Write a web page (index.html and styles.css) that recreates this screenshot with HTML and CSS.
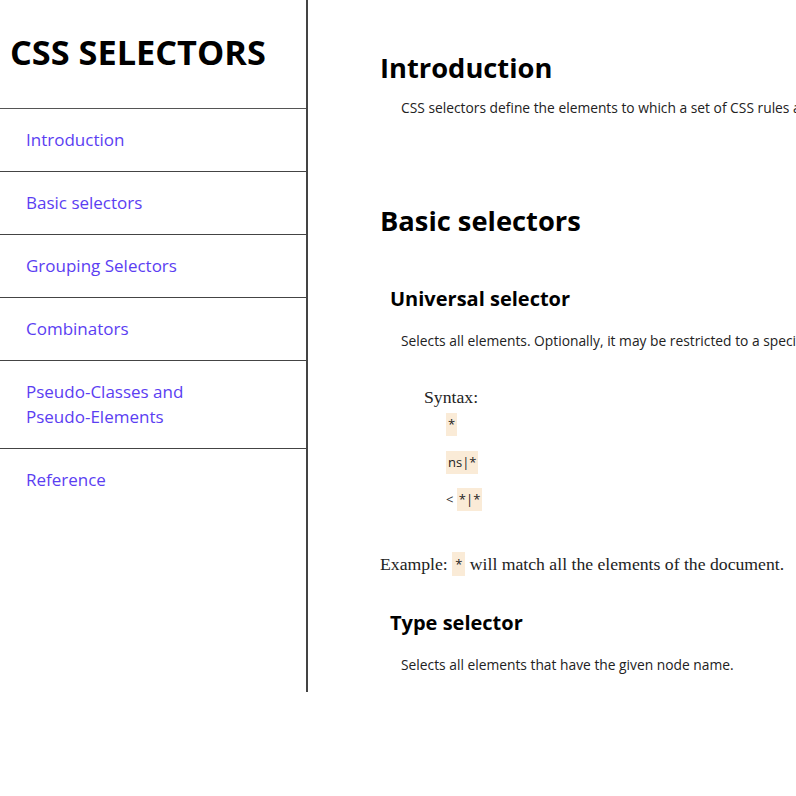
FILE: index.html
```html
<!DOCTYPE html>
<html lang="en">
<head>
<meta charset="utf-8">
<title>CSS Selectors</title>
<link rel="stylesheet" href="styles.css">
</head>
<body>
<div class="page">
  <nav id="navbar" class="navbar">
    <header class="nav-title">CSS SELECTORS</header>
    <ul class="nav-list">
      <li class="nav-item"><a class="nav-link" href="#Introduction">Introduction</a></li>
      <li class="nav-item"><a class="nav-link" href="#Basic_selectors">Basic selectors</a></li>
      <li class="nav-item"><a class="nav-link" href="#Grouping_Selectors">Grouping Selectors</a></li>
      <li class="nav-item"><a class="nav-link" href="#Combinators">Combinators</a></li>
      <li class="nav-item"><a class="nav-link" href="#Pseudo">Pseudo-Classes and Pseudo-Elements</a></li>
      <li class="nav-item"><a class="nav-link" href="#Reference">Reference</a></li>
    </ul>
  </nav>
  <main id="main-doc" class="main-doc">
    <section class="main-section" id="Introduction">
      <header class="section-title">Introduction</header>
      <p class="text intro-text">CSS selectors define the elements to which a set of CSS rules apply.</p>
    </section>
    <section class="main-section basic" id="Basic_selectors">
      <header class="section-title">Basic selectors</header>
      <article class="sub">
        <h3 class="sub-title first">Universal selector</h3>
        <p class="text">Selects all elements. Optionally, it may be restricted to a specific namespace or to all namespaces.</p>
        <div class="syntax">
          <div class="syntax-label">Syntax:</div>
          <ul class="syntax-list">
            <li class="syntax-item"><code class="code">*</code></li>
            <li class="syntax-item"><code class="code">ns|*</code></li>
            <li class="syntax-item"><span class="lt">&lt;</span> <code class="code">*|*</code></li>
          </ul>
        </div>
        <p class="example">Example: <code class="code">*</code> will match all the elements of the document.</p>
        <h3 class="sub-title">Type selector</h3>
        <p class="text">Selects all elements that have the given node name.</p>
      </article>
    </section>
  </main>
</div>
</body>
</html>
```
FILE: styles.css
```css
html, body {
  margin: 0;
  padding: 0;
  overflow: hidden;
  background: #fff;
}
.page {
  display: flex;
  align-items: flex-start;
  width: 1400px;
}
.navbar {
  flex: 0 0 306px;
  height: 692px;
  border-right: 2px solid #444;
  font-family: "Open Sans", sans-serif;
}
.nav-title {
  height: 109px;
  box-sizing: border-box;
  padding: 32px 0 0 10px;
  font-size: 34.3px;
  line-height: 40px;
  font-weight: 700;
  color: #000;
  border-bottom: 1px solid #555;
}
.nav-list {
  list-style: none;
  margin: 0;
  padding: 0;
}
.nav-item {
  padding: 18px 70px 19px 26px;
  border-bottom: 1px solid #444;
  font-size: 17px;
  line-height: 25px;
}
.nav-item:last-child {
  border-bottom: none;
}
.nav-link {
  color: #5b3ef2;
  text-decoration: none;
}
.main-doc {
  flex: 1;
  padding: 48px 0 0 72px;
  font-family: "Open Sans", sans-serif;
  white-space: nowrap;
}
.section-title {
  font-size: 27.3px;
  line-height: 40px;
  font-weight: 700;
  color: #000;
}
.text {
  margin: 8px 0 0 21px;
  font-size: 13.8px;
  line-height: 20px;
  color: #222;
}
.intro-text {
  margin-top: 10px;
}
.basic {
  margin-top: 83px;
}
.sub {
  padding-left: 10px;
}
.sub-title {
  margin: 33px 0 0 0;
  font-size: 20px;
  line-height: 28px;
  font-weight: 700;
  color: #000;
}
.sub-title.first {
  margin-top: 44px;
}
.sub .text {
  margin: 18px 0 0 11px;
}
.syntax {
  margin: 35px 0 0 34px;
  font-family: "Liberation Serif", serif;
  font-size: 17.7px;
  color: #222;
}
.syntax-label {
  line-height: 22px;
}
.syntax-list {
  list-style: none;
  margin: 5px 0 0 0;
  padding: 0 0 0 22px;
  display: flex;
  flex-direction: column;
  gap: 14.5px;
}
.syntax-item {
  font-family: "Open Sans", sans-serif;
  font-size: 13px;
  color: #333;
  line-height: 23px;
  height: 23px;
}
.code {
  display: inline-block;
  background: #faebd7;
  font-family: "Open Sans", sans-serif;
  font-size: 13px;
  line-height: 23px;
  padding: 0 2px;
  color: #222;
}
.example {
  margin: 41px 0 0 -10px;
  font-family: "Liberation Serif", serif;
  font-size: 17.7px;
  line-height: 24px;
  color: #222;
}
.example .code {
  line-height: 24px;
  padding: 0 3px;
  vertical-align: top;
}
```
